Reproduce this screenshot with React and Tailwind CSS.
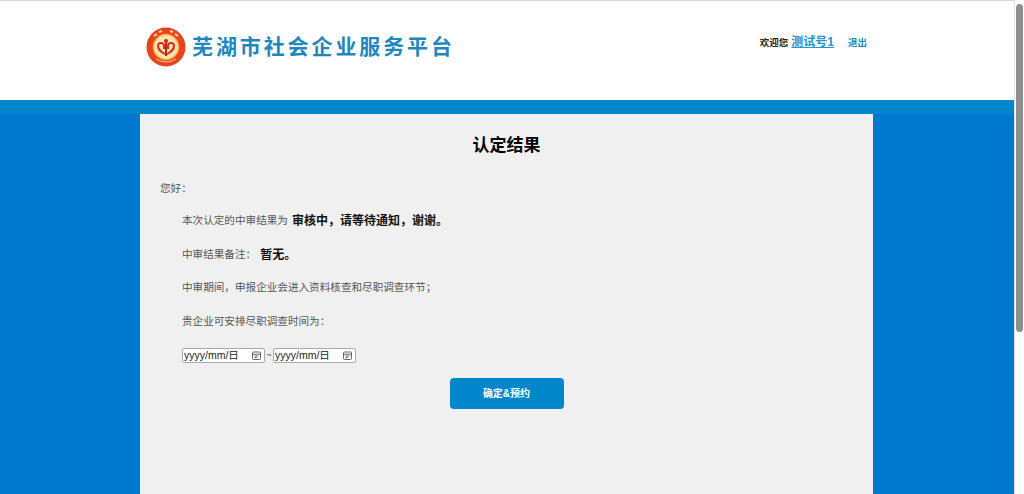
const CJK = "font-['Liberation_Sans','Noto_Sans_CJK_SC',sans-serif]";

function Logo() {
  return (
    <svg width="40" height="40" viewBox="0 0 40 40" className="shrink-0">
      <circle cx="20" cy="20" r="19.5" fill="#e8431f" />
      <circle cx="20" cy="20" r="12.5" fill="#fbe3b8" />
      <circle cx="20" cy="20" r="12.5" fill="none" stroke="#f7b23c" strokeWidth="1.5" />
      <path d="M11 19 a4 4 0 0 1 8 0 v3 h-2 v-3 a2 2 0 0 0 -4 0 q1 4 6 7 v2 q-8 -3 -8 -9z" fill="#d8321c" />
      <path d="M29 19 a4 4 0 0 0 -8 0 v3 h2 v-3 a2 2 0 0 1 4 0 q-1 4 -6 7 v2 q8 -3 8 -9z" fill="#d8321c" />
      <circle cx="20" cy="14" r="2" fill="#c02818" />
      <path d="M19 16 h2 v13 h-2z" fill="#c02818" />
      <path d="M8 9 l3 -2 M13 5 l3 -1 M24 4 l3 1 M29 7 l3 2" stroke="#fbd9a0" strokeWidth="2" />
      <path d="M10 32 q10 6 20 0" fill="none" stroke="#f9c98a" strokeWidth="1" />
    </svg>
  );
}

function DateBox() {
  return (
    <div className="flex items-center justify-between w-[83px] h-[15px] bg-white border border-[#a9a9a9] rounded-[2px] pl-[1px] pr-[3px] text-[10.5px] text-[#222] leading-none">
      <span>yyyy/mm/日</span>
      <svg width="9" height="9" viewBox="0 0 9 9" fill="none" stroke="#555" strokeWidth="0.9">
        <rect x="0.5" y="1" width="8" height="7.5" rx="1" />
        <path d="M0.5 3.2 H8.5 M2.5 5 H6.5 M2.5 6.7 H5" />
      </svg>
    </div>
  );
}

export default function App() {
  return (
    <div className={`flex h-[494px] w-[1024px] overflow-hidden ${CJK}`}>
      <div className="w-[1014px] flex flex-col bg-[#0078cf]">
        <header className="h-[100px] bg-white border-t border-[#d8d8d8] shrink-0">
          <div className="w-[733px] ml-[140px] flex">
            <div className="flex items-center ml-[6px] mt-[26px] gap-[6px] h-[40px]">
              <Logo />
              <span className="-mt-[2px] text-[21px] font-bold tracking-[2.9px] text-[#1f87bd] leading-none whitespace-nowrap">芜湖市社会企业服务平台</span>
            </div>
            <div className="ml-auto mr-[6px] mt-[32px] flex items-baseline h-[16px]">
              <span className="text-[9.5px] font-bold text-[#222]">欢迎您</span>
              <a className="ml-[3px] text-[12px] font-bold text-[#2a93c9] underline">测试号1</a>
              <a className="ml-[14px] text-[9.5px] font-bold text-[#1f87bd]">退出</a>
            </div>
          </div>
        </header>
        <div className="h-[14px] bg-[#0087cb] shrink-0" />
        <main className="w-[733px] ml-[140px] flex-1 bg-[#f0f0f0] px-[20px] text-[10.6px] text-[#555]">
          <h1 className="mt-[20px] h-[24px] text-center text-[17px] leading-[24px] font-bold text-black">认定结果</h1>
          <p className="mt-[23px] leading-[14px]">您好：</p>
          <div className="ml-[22px]">
            <p className="mt-[18px] h-[16px] flex items-center">
              本次认定的中审结果为
              <strong className="ml-[4px] text-[12px] text-[#111]">审核中，请等待通知，谢谢。</strong>
            </p>
            <p className="mt-[18px] h-[16px] flex items-center">
              中审结果备注：
              <strong className="ml-[4px] text-[12px] text-[#111]">暂无。</strong>
            </p>
            <p className="mt-[17px] h-[16px] flex items-center">中审期间，申报企业会进入资料核查和尽职调查环节；</p>
            <p className="mt-[18px] h-[16px] flex items-center">贵企业可安排尽职调查时间为：</p>
            <div className="mt-[18px] flex items-center">
              <DateBox />
              <span className="w-[8px] text-center text-[9px]">~</span>
              <DateBox />
            </div>
          </div>
          <div className="mt-[15px] flex justify-center">
            <button className="w-[114px] h-[31px] bg-[#0087cb] rounded-[4px] text-white text-[10px] font-bold">确定&amp;预约</button>
          </div>
        </main>
      </div>
      <div className="w-[10px] bg-white border-l border-[#e0e0e0] flex justify-center pt-[4px]">
        <div className="w-[7px] h-[328px] bg-[#8f8f8f] rounded-[4px]" />
      </div>
    </div>
  );
}
